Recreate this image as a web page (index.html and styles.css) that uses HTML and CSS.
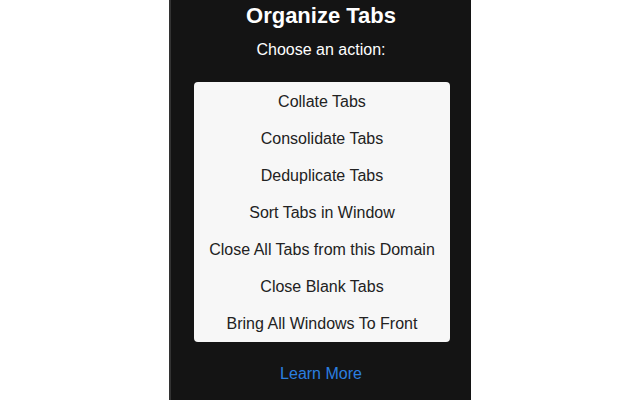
FILE: index.html
```html
<!DOCTYPE html>
<html lang="en">
<head>
  <meta charset="UTF-8" />
  <title>Organize Tabs</title>
  <link rel="stylesheet" href="styles.css">
</head>
<body>
  <div class="popup">
    <h1>Organize Tabs</h1>
    <p class="prompt">Choose an action:</p>

    <div class="actions">
      <button class="action">Collate Tabs</button>
      <button class="action">Consolidate Tabs</button>
      <button class="action">Deduplicate Tabs</button>
      <button class="action">Sort Tabs in Window</button>
      <button class="action">Close All Tabs from this Domain</button>
      <button class="action">Close Blank Tabs</button>
      <button class="action">Bring All Windows To Front</button>
    </div>

    <a class="learn" href="#">Learn More</a>
  </div>
</body>
</html>
```

FILE: styles.css
```css
body {
  margin: 0;
  background: #fff;
  font-family: 'Liberation Sans', Arial, sans-serif;
}

.popup {
  width: 300px;
  height: 400px;
  margin: 0 auto;
  background: #141414;
  border-left: 2px solid #333;
  color: #fff;
  text-align: center;
  display: flex;
  flex-direction: column;
  align-items: center;
}

h1 {
  margin: 3px 0 0;
  font-size: 22px;
  line-height: 26px;
  font-weight: bold;
}

.prompt {
  margin: 11px 0 0;
  font-size: 16px;
  line-height: 20px;
}

.actions {
  width: 256px;
  margin: 22px 0 0 2px;
  padding-top: 1px;
  background: #f7f7f7;
  border-radius: 4px;
  display: flex;
  flex-direction: column;
}

.action {
  height: 37px;
  border: 0;
  background: none;
  font-family: inherit;
  font-size: 16px;
  color: #222;
  padding: 0;
}

.learn {
  margin-top: 22px;
  font-size: 16px;
  line-height: 20px;
  color: #2b7fe0;
  text-decoration: none;
}
```
